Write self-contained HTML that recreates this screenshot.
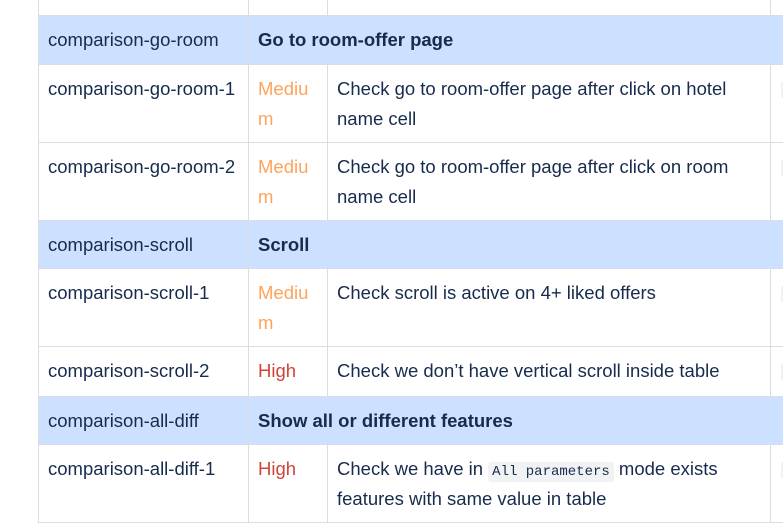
<!DOCTYPE html>
<html><head><meta charset="utf-8"><style>
html,body{margin:0;padding:0;background:#fff;width:783px;height:516px;overflow:hidden}
body{font-family:"Liberation Sans","DejaVu Sans",sans-serif;font-size:18.5px;color:#172b4d}
table{position:absolute;left:38px;top:-34px;border-collapse:collapse;table-layout:fixed;width:760px}
td{border:1px solid #dcdde3;padding:9px 8px 0 9px;vertical-align:top;line-height:30px;overflow:hidden}
tr.h td{background:#cce0ff;padding-top:9px}
tr.h td b{font-weight:bold}
.m{color:#ffa35a}.hi{color:#d04437}
code{font-family:"Liberation Mono",monospace;font-size:14px;line-height:1;background:#f1f2f4;border-radius:3px;padding:2px 4px}
.x{padding:0}
.bd{display:inline-block;width:10px;height:18px;background:#f1f2f4;border-radius:3px;margin-top:16px;margin-left:10px}
</style></head><body>
<table>
<colgroup><col style="width:210px"><col style="width:79px"><col style="width:443px"><col style="width:28px"></colgroup>
<tr style="height:49px"><td></td><td></td><td></td><td></td></tr>
<tr class="h" style="height:49px"><td>comparison-go-room</td><td colspan="3"><b>Go to room-offer page</b></td></tr>
<tr style="height:78px"><td>comparison-go-room-1</td><td class="m">Mediu m</td><td>Check go to room-offer page after click on hotel name cell</td><td class="x"><span class="bd"></span></td></tr>
<tr style="height:78px"><td>comparison-go-room-2</td><td class="m">Mediu m</td><td>Check go to room-offer page after click on room name cell</td><td class="x"><span class="bd"></span></td></tr>
<tr class="h" style="height:48px"><td>comparison-scroll</td><td colspan="3"><b>Scroll</b></td></tr>
<tr style="height:78px"><td>comparison-scroll-1</td><td class="m">Mediu m</td><td>Check scroll is active on 4+ liked offers</td><td class="x"><span class="bd"></span></td></tr>
<tr style="height:50px"><td>comparison-scroll-2</td><td class="hi">High</td><td>Check we don’t have vertical scroll inside table</td><td class="x"><span class="bd"></span></td></tr>
<tr class="h" style="height:48px"><td>comparison-all-diff</td><td colspan="3"><b>Show all or different features</b></td></tr>
<tr style="height:78px"><td>comparison-all-diff-1</td><td class="hi">High</td><td>Check we have in <code>All parameters</code> mode exists features with same value in table</td><td class="x"><span class="bd"></span></td></tr>
</table>
</body></html>
